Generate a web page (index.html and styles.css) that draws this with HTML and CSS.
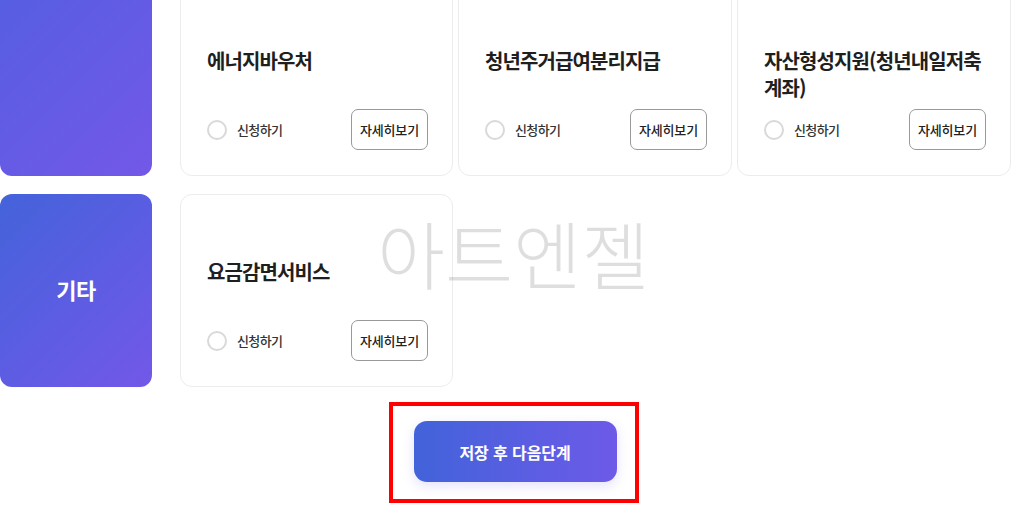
FILE: index.html
```html
<!DOCTYPE html>
<html lang="ko">
<head>
<meta charset="utf-8">
<link rel="stylesheet" href="styles.css">
</head>
<body>
<div class="page">
  <div class="row row-first">
    <div class="category category-tall"></div>
    <div class="cards">
      <div class="card">
        <h3 class="title">에너지바우처</h3>
        <div class="actions">
          <label class="apply"><span class="radio"></span>신청하기</label>
          <button class="more">자세히보기</button>
        </div>
      </div>
      <div class="card">
        <h3 class="title">청년주거급여분리지급</h3>
        <div class="actions">
          <label class="apply"><span class="radio"></span>신청하기</label>
          <button class="more">자세히보기</button>
        </div>
      </div>
      <div class="card">
        <h3 class="title">자산형성지원(청년내일저축<br>계좌)</h3>
        <div class="actions">
          <label class="apply"><span class="radio"></span>신청하기</label>
          <button class="more">자세히보기</button>
        </div>
      </div>
    </div>
  </div>
  <div class="row">
    <div class="category"><span>기타</span></div>
    <div class="cards">
      <div class="card">
        <h3 class="title">요금감면서비스</h3>
        <div class="actions">
          <label class="apply"><span class="radio"></span>신청하기</label>
          <button class="more">자세히보기</button>
        </div>
      </div>
    </div>
  </div>
  <div class="footer">
    <div class="highlight">
      <button class="next">저장 후 다음단계</button>
    </div>
  </div>
  <div class="watermark">아트엔젤</div>
</div>
</body>
</html>
```
FILE: styles.css
```css
* { box-sizing: border-box; }
html, body { margin: 0; padding: 0; background: #ffffff; }
body {
  font-family: "Noto Sans CJK KR", "Noto Sans", sans-serif;
  color: #222;
  overflow: hidden;
  height: 517px;
}
.page {
  position: relative;
  display: flow-root;
  width: 1024px;
  height: 517px;
}
.row {
  display: flex;
  align-items: flex-end;
  margin-bottom: 18px;
}
.row-first { margin-top: -228px; }
.category {
  width: 152px;
  height: 193px;
  border-radius: 12px;
  background: linear-gradient(135deg, #4463da 0%, #5b5de2 50%, #7358e8 100%);
  display: flex;
  align-items: center;
  justify-content: center;
  flex-shrink: 0;
}
.category-tall { height: 404px; }
.category span {
  color: #fff;
  font-size: 22px;
  font-weight: 700;
  letter-spacing: -0.6px;
  margin-top: -3px;
}
.cards {
  display: flex;
  gap: 5px;
  margin-left: 28px;
}
.card {
  width: 274px;
  height: 193px;
  border: 1px solid #ececec;
  border-radius: 12px;
  background: #fff;
  padding: 0 24px 25px 26px;
  display: flex;
  flex-direction: column;
}
.card:first-child { width: 273px; }
.title {
  margin: 63px 0 0;
  font-size: 20px;
  line-height: 27px;
  font-weight: 700;
  letter-spacing: -0.9px;
  color: #1f1f1f;
}
.actions {
  margin-top: auto;
  display: flex;
  align-items: center;
  justify-content: space-between;
}
.apply {
  display: flex;
  align-items: center;
  gap: 10px;
  font-size: 13px;
  letter-spacing: -0.6px;
  color: #333;
  font-weight: 500;
}
.radio {
  width: 20px;
  height: 20px;
  border: 2px solid #d9d9d9;
  border-radius: 50%;
  background: #fff;
}
.more {
  width: 77px;
  height: 41px;
  border: 1px solid #999;
  border-radius: 7px;
  background: #fff;
  font-family: inherit;
  font-size: 13px;
  font-weight: 500;
  letter-spacing: -0.2px;
  color: #222;
  padding: 0;
}
.footer {
  display: flex;
  justify-content: center;
  padding-left: 3px;
  margin-top: -3px;
}
.highlight {
  border: 4px solid #ff0000;
  padding: 15px 18px 17px 21px;
}
.next {
  width: 203px;
  height: 61px;
  border: 0;
  border-radius: 13px;
  background: linear-gradient(90deg, #4263da 0%, #6d5ae8 100%);
  box-shadow: 0 4px 12px rgba(108, 90, 232, 0.18);
  color: #fff;
  font-family: inherit;
  font-size: 16px;
  font-weight: 700;
  letter-spacing: -0.1px;
  padding: 0;
  display: block;
}
.watermark {
  position: absolute;
  left: 377px;
  top: 207px;
  font-size: 74px;
  font-weight: 300;
  line-height: 90px;
  letter-spacing: 0;
  color: rgba(0, 0, 0, 0.13);
  pointer-events: none;
  white-space: nowrap;
}
```
